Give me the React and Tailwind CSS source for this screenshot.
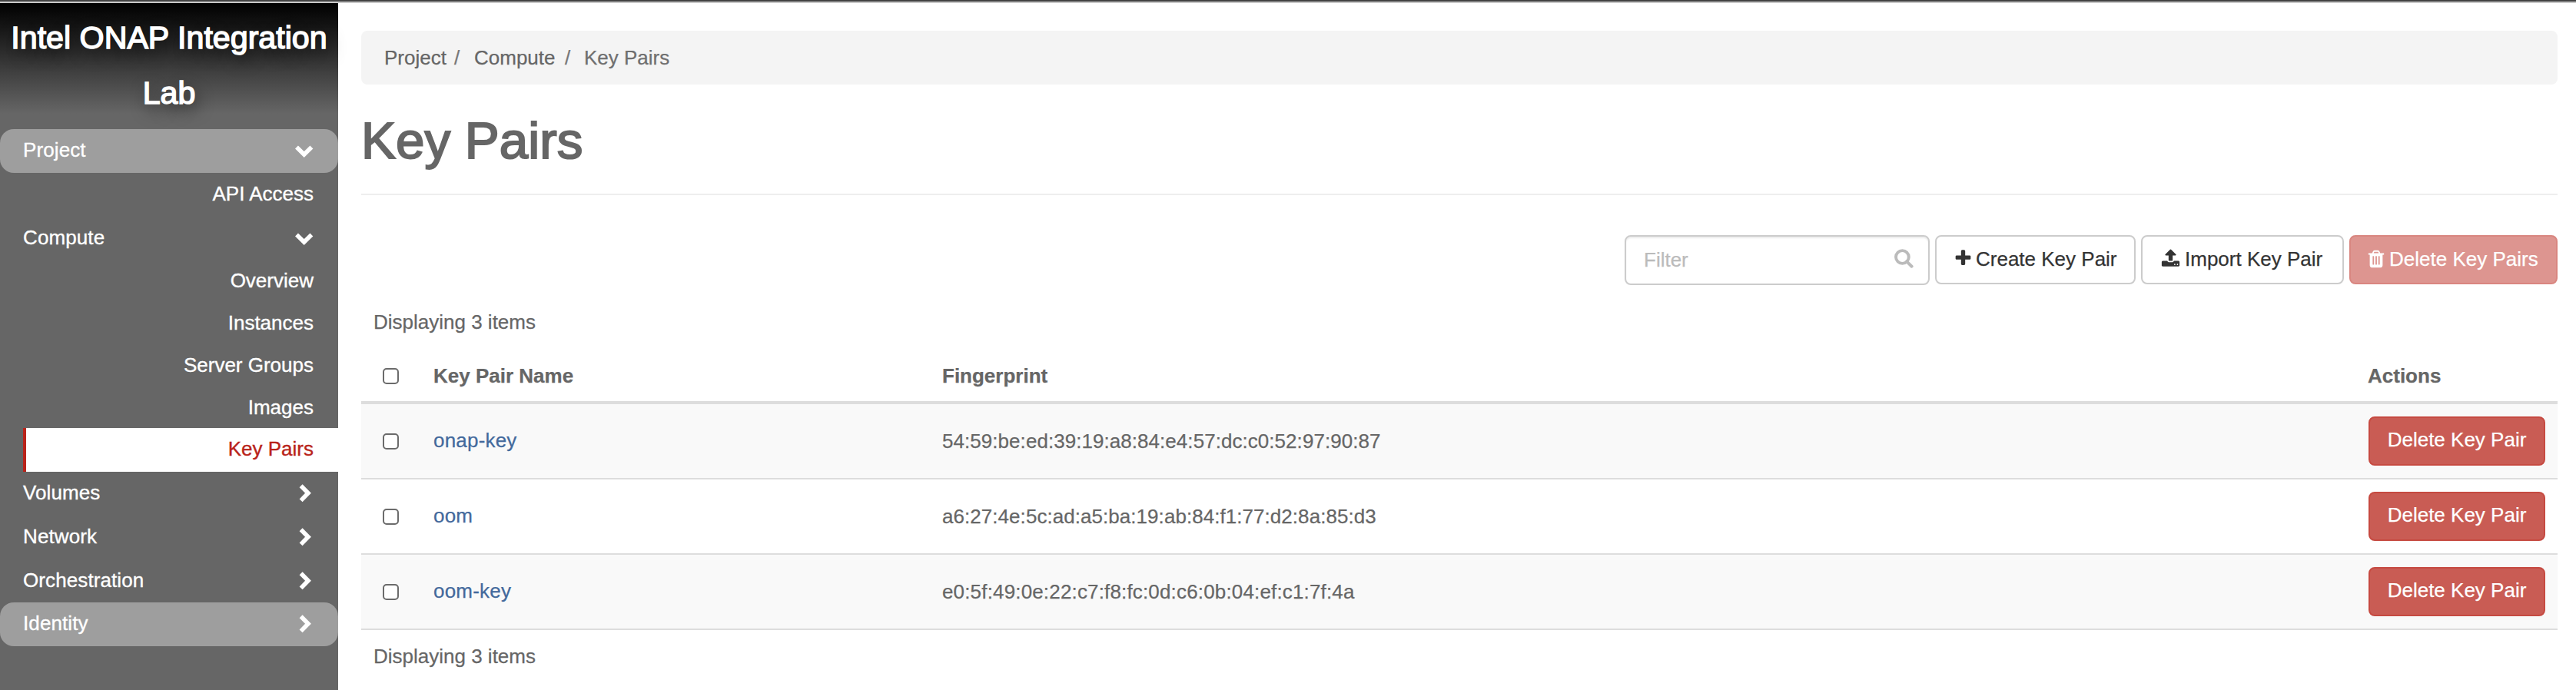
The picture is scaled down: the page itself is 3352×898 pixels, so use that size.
const SANS = "font-['Liberation_Sans',Arial,sans-serif]";

const PATHS = {
  plus: 'M1600 736v192q0 40-28 68t-68 28h-416v416q0 40-28 68t-68 28h-192q-40 0-68-28t-28-68v-416h-416q-40 0-68-28t-28-68v-192q0-40 28-68t68-28h416v-416q0-40 28-68t68-28h192q40 0 68 28t28 68v416h416q40 0 68 28t28 68z',
  upload:
    'M1344 1472q0-26-19-45t-45-19-45 19-19 45 19 45 45 19 45-19 19-45zm256 0q0-26-19-45t-45-19-45 19-19 45 19 45 45 19 45-19 19-45zm128-224v320q0 40-28 68t-68 28h-1472q-40 0-68-28t-28-68v-320q0-40 28-68t68-28h427q21 56 70.5 92t110.5 36h256q61 0 110.5-36t70.5-92h427q40 0 68 28t28 68zm-325-648q-17 40-59 40h-256v448q0 26-19 45t-45 19h-256q-26 0-45-19t-19-45v-448h-256q-42 0-59-40-17-39 14-69l448-448q18-19 45-19t45 19l448 448q31 30 14 69z',
  trash:
    'M704 1376v-704q0-14-9-23t-23-9h-64q-14 0-23 9t-9 23v704q0 14 9 23t23 9h64q14 0 23-9t9-23zm256 0v-704q0-14-9-23t-23-9h-64q-14 0-23 9t-9 23v704q0 14 9 23t23 9h64q14 0 23-9t9-23zm256 0v-704q0-14-9-23t-23-9h-64q-14 0-23 9t-9 23v704q0 14 9 23t23 9h64q14 0 23-9t9-23zm-544-992h448l-48-117q-7-9-17-11h-317q-10 2-17 11zm928 32v64q0 14-9 23t-23 9h-96v948q0 83-47 143.5t-113 60.5h-832q-66 0-113-58.5t-47-141.5v-952h-96q-14 0-23-9t-9-23v-64q0-14 9-23t23-9h309l70-167q15-37 54-63t79-26h320q40 0 79 26t54 63l70 167h309q14 0 23 9t9 23z',
};

function Icon({ name, className }) {
  return (
    <svg viewBox="0 0 1792 1792" fill="currentColor" className={className}>
      <path d={PATHS[name]} />
    </svg>
  );
}

function SearchIcon() {
  return (
    <svg viewBox="0 0 25 25" fill="none" stroke="currentColor" className="mt-[1px] h-[25px] w-[25px]">
      <circle cx="10.4" cy="10.5" r="8.4" strokeWidth="3.9" />
      <path d="M16.2 16.4 L22.6 22.7" strokeWidth="4" strokeLinecap="round" />
    </svg>
  );
}

function Chevron({ open }) {
  return open ? (
    <svg viewBox="0 0 24 16" className="mt-[21px] h-4 w-6" fill="none" stroke="currentColor" strokeWidth="5.6">
      <path d="M2 2.6 L11.7 12 L21.4 2.6" />
    </svg>
  ) : (
    <svg viewBox="0 0 16 24" className="mt-4 mr-[3px] h-6 w-4" fill="none" stroke="currentColor" strokeWidth="5.6">
      <path d="M2.6 2.2 L12 11.8 L2.6 21.4" />
    </svg>
  );
}

function Group({ label, open, pill, h }) {
  return (
    <div className={`flex justify-between pr-8 pl-[30px] ${h} ${pill ? 'rounded-[18px] bg-[#9e9e9e]' : ''}`}>
      <span className="pt-3 tracking-[0.1px]">{label}</span>
      <Chevron open={open} />
    </div>
  );
}

function Leaf({ label, h }) {
  return <div className={`pr-8 text-right ${h}`}>{label}</div>;
}

function Sidebar() {
  return (
    <aside className="relative z-10 flex h-[894px] w-[440px] shrink-0 flex-col bg-[#666] text-[26px] leading-[30px] text-white [-webkit-text-stroke:0.35px_currentColor]">
      <div className="h-[164px] bg-[linear-gradient(#000_0px,#666_144px)] pt-[9px] text-center text-[41.2px] leading-[72px] [-webkit-text-stroke:1.5px_white] [text-shadow:4px_8px_20px_rgba(0,0,0,0.7)]">
        Intel ONAP Integration
        <br />
        Lab
      </div>
      <Group label="Project" open pill h="h-[57px]" />
      <Leaf label="API Access" h="h-[57px] pt-3" />
      <Group label="Compute" open h="h-[57px]" />
      <Leaf label="Overview" h="h-[54px] pt-[11px]" />
      <Leaf label="Instances" h="h-[55px] pt-3" />
      <Leaf label="Server Groups" h="h-[55px] pt-3" />
      <Leaf label="Images" h="h-[54px] pt-3" />
      <div className="ml-[30px] h-[57px] border-l-4 border-[#b9231a] bg-white pt-3 pr-8 text-right text-[#b9231a]">
        Key Pairs
      </div>
      <Group label="Volumes" h="h-[57px]" />
      <Group label="Network" h="h-[57px]" />
      <Group label="Orchestration" h="h-[56px]" />
      <Group label="Identity" pill h="h-[57px]" />
    </aside>
  );
}

function Checkbox() {
  return <span className="block h-[21px] w-[21px] rounded-[5px] border-2 border-[#6b6b6b] bg-white" />;
}

function ToolButton({ icon, iconClass, label, className }) {
  return (
    <button className={`flex h-16 rounded-lg border-2 pt-[14px] leading-[30px] whitespace-nowrap ${className}`}>
      <Icon name={icon} className={iconClass} />
      {label}
    </button>
  );
}

const COLS = 'grid grid-cols-[94px_660px_1855px_1fr]';

const ROWS = [
  { name: 'onap-key', print: '54:59:be:ed:39:19:a8:84:e4:57:dc:c0:52:97:90:87', tracking: 'tracking-[0.05px]' },
  { name: 'oom', print: 'a6:27:4e:5c:ad:a5:ba:19:ab:84:f1:77:d2:8a:85:d3', tracking: 'tracking-[0.05px]' },
  { name: 'oom-key', print: 'e0:5f:49:0e:22:c7:f8:fc:0d:c6:0b:04:ef:c1:7f:4a', tracking: 'tracking-[0.16px]' },
];

function KeyTable() {
  return (
    <div className="leading-[30px]">
      <div className="h-[54px] pl-4">Displaying 3 items</div>
      <div className={`${COLS} h-[68px] border-b-4 border-[#ddd] font-bold`}>
        <span className="pt-[21px] pl-7">
          <Checkbox />
        </span>
        <span className="pt-4">Key Pair Name</span>
        <span className="pt-4 pl-[2px]">Fingerprint</span>
        <span className="pt-4 pl-[2px]">Actions</span>
      </div>
      {ROWS.map(({ name, print, tracking }, i) => (
        <div key={name} className={`${COLS} h-[98px] border-b-2 border-[#ddd] ${i % 2 ? 'bg-white' : 'bg-[#f9f9f9]'}`}>
          <span className="pt-[38px] pl-7">
            <Checkbox />
          </span>
          <a className="pt-8 tracking-[0.2px] text-[#43699c]">{name}</a>
          <span className={`pt-[33px] pl-[2px] ${tracking}`}>{print}</span>
          <span className="pt-4 pl-[3px]">
            <button className="h-16 w-[230px] rounded-lg border-2 border-[#c64a41] bg-[#c95c54] pb-1 text-white">
              Delete Key Pair
            </button>
          </span>
        </div>
      ))}
      <div className="pt-[19px] pl-4">Displaying 3 items</div>
    </div>
  );
}

export default function App() {
  return (
    <div className={`h-[898px] w-[3352px] overflow-hidden border-t-2 border-[#424242] bg-white text-[26px] text-[#666] [-webkit-text-stroke:0.25px_currentColor] ${SANS}`}>
      <div className="h-[2px] bg-[#c8c8c8]" />
      <div className="flex">
        <Sidebar />
        <main className="flex w-[2888px] flex-col pt-9 pl-[30px]">
          <nav className="flex h-[70px] rounded-lg bg-[#f4f4f4] pt-5 pl-[30px] leading-[30px]">
            <span className="w-[91px]">Project</span>
            <span className="w-[26px] text-[#777]">/</span>
            <span className="w-[118px]">Compute</span>
            <span className="w-[25px] text-[#777]">/</span>
            <span className="text-[#6f6f6f]">Key Pairs</span>
          </nav>
          <h1 className="h-[144px] border-b-2 border-[#eee] pt-[35px] text-[67.4px] leading-[76px] [-webkit-text-stroke:2px_#666]">
            Key Pairs
          </h1>
          <div className="flex justify-end gap-[7px] pt-[52px] text-[#333]">
            <div className="flex h-[65px] w-[397px] justify-between rounded-lg border-2 border-[#ccc] pt-[15px] pr-[19px] pl-[23px] leading-[30px] text-[#bbb] shadow-[inset_0_2px_2px_rgba(0,0,0,0.075)]">
              <span>Filter</span>
              <SearchIcon />
            </div>
            <ToolButton icon="plus" label="Create Key Pair" iconClass="mt-[1px] mr-[4px] h-[26px] w-[25px]" className="w-[261px] border-[#ccc] pl-[22px]" />
            <ToolButton icon="upload" label="Import Key Pair" iconClass="mt-[1px] mr-[6px] h-[26px] w-[25px]" className="w-[264px] border-[#ccc] pl-6" />
            <ToolButton icon="trash" label="Delete Key Pairs" iconClass="mt-[2px] mr-[4px] h-[26px] w-[26px]" className="w-[271px] border-[#d98680] bg-[#dd9590] pl-[20px] text-white" />
          </div>
          <div className="pt-[33px]">
            <KeyTable />
          </div>
        </main>
      </div>
    </div>
  );
}
